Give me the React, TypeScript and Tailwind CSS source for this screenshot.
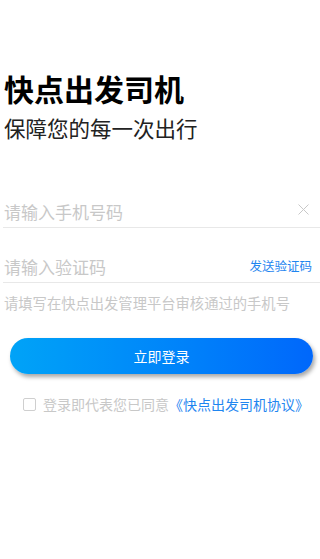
export default function App() {
  return (
    <div
      className="w-[320px] h-[559px] bg-white overflow-hidden"
      style={{ fontFamily: '"Noto Sans CJK SC", "Noto Sans", sans-serif' }}
    >
      <div className="pt-[67px] pl-[4px]">
        <h1 className="text-[30px] leading-[42px] font-bold text-black">快点出发司机</h1>
        <p className="mt-[4px] text-[21.5px] leading-[30px] text-[#222]">保障您的每一次出行</p>
      </div>

      <div className="mt-[53px] pl-[3px]">
        <div className="flex items-center h-[32px] border-b border-[#e8e8e8]">
          <span className="flex-1 pl-[1px] text-[17px] text-[#c8c8c8]">请输入手机号码</span>
          <svg width="11" height="11" viewBox="0 0 11 11" className="mr-[11px] -mt-[4px]">
            <path d="M0.5 0.5 L10.5 10.5 M10.5 0.5 L0.5 10.5" stroke="#c8c8c8" strokeWidth="1" />
          </svg>
        </div>
        <div className="flex items-center h-[32px] mt-[23px] border-b border-[#e8e8e8]">
          <span className="flex-1 pl-[1px] text-[17px] text-[#c8c8c8]">请输入验证码</span>
          <span className="mr-[8px] text-[12.5px] text-[#1f86f0]">发送验证码</span>
        </div>
        <p className="mt-[10px] pl-[1px] text-[14.3px] leading-[20px] text-[#c8c8c8]">请填写在快点出发管理平台审核通过的手机号</p>
      </div>

      <div className="mt-[25px] pl-[10px] pr-[7px]">
        <button
          className="w-full h-[36px] rounded-full bg-gradient-to-r from-[#00a3f7] to-[#0067fb] text-white text-[14px] shadow-[2px_3px_4px_rgba(0,0,0,0.35)]"
        >
          立即登录
        </button>
      </div>

      <div className="mt-[20px] h-[20px] flex items-center pl-[23px]">
        <span className="w-[13px] h-[13px] border border-[#cfcfcf] rounded-[2px]" />
        <span className="ml-[7px] text-[14px] text-[#c8c8c8]">登录即代表您已同意</span>
        <span className="text-[14px] text-[#1f86f0]">《快点出发司机协议》</span>
      </div>
    </div>
  );
}
